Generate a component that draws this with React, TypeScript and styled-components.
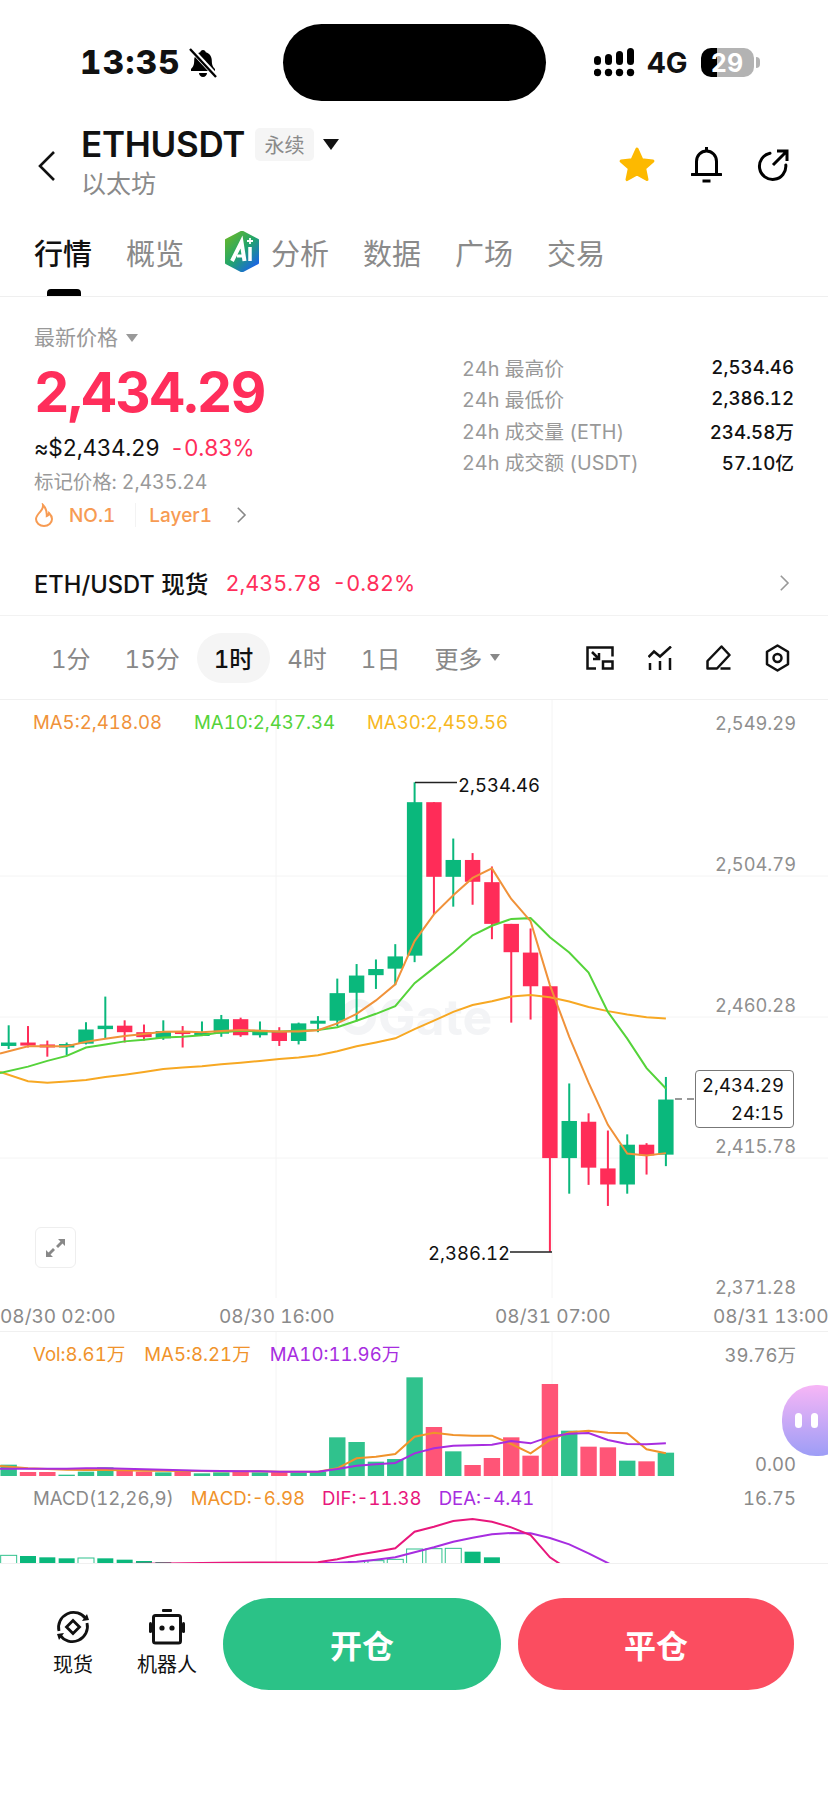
import React from 'react';
import styled, { createGlobalStyle } from 'styled-components';

const FONT = `Inter, 'Noto Sans CJK SC', sans-serif`;

const GlobalStyle = createGlobalStyle`
  html, body {
    margin: 0;
    padding: 0;
    background: #fff;
  }
  body {
    font-family: ${FONT};
    font-variant-numeric: tabular-nums;
    color: #111;
  }
  * {
    box-sizing: border-box;
  }
`;

const Page = styled.div`
  width: 828px;
  height: 1796px;
  overflow: hidden;
  background: #fff;
`;

/* status bar */
const StatusBar = styled.div`
  display: flex;
  height: 101px;
  padding-top: 24px;
`;

const StatusLeft = styled.div`
  width: 283px;
  height: 77px;
  padding-left: 80px;
  display: flex;
  align-items: center;
  gap: 7px;
`;

const Clock = styled.span`
  font-size: 33px;
  font-weight: 800;
  line-height: 1;
  letter-spacing: 1.4px;
`;

const Island = styled.div`
  width: 263px;
  height: 77px;
  border-radius: 39px;
  background: #000;
`;

const StatusRight = styled.div`
  flex: 1;
  height: 77px;
  padding-left: 48px;
  display: flex;
  align-items: center;
`;

const NetLabel = styled.span`
  margin-left: 12px;
  font-size: 29px;
  font-weight: 700;
  line-height: 1;
`;

const Battery = styled.div`
  position: relative;
  margin-left: 13px;
  width: 53px;
  height: 29px;
  border-radius: 10px;
  background: linear-gradient(90deg, #000 0 30%, #b3b3b3 30% 100%);
  display: flex;
  align-items: center;
  justify-content: center;
  color: #fff;
  font-size: 25px;
  font-weight: 700;

  &::after {
    content: '';
    position: absolute;
    right: -6px;
    top: 9px;
    width: 4px;
    height: 11px;
    border-radius: 0 4px 4px 0;
    background: #b3b3b3;
  }
`;

/* header */
const Header = styled.div`
  height: 106px;
  display: flex;
  align-items: flex-start;
  padding: 19px 39px 0 37px;
`;

const BackButton = styled.div`
  width: 44px;
  padding-top: 30px;
  display: flex;
`;

const TitleBlock = styled.div`
  flex: 1;
  display: flex;
  flex-direction: column;
`;

const TitleRow = styled.div`
  display: flex;
  align-items: center;
  height: 48px;
`;

const Symbol = styled.span`
  font-size: 35px;
  font-weight: 600;
  line-height: 48px;
  letter-spacing: -0.3px;
`;

const Badge = styled.span`
  margin-left: 10px;
  width: 59px;
  height: 33px;
  border-radius: 5px;
  background: #f5f5f5;
  color: #8a8a8a;
  font-size: 20px;
  display: flex;
  align-items: center;
  justify-content: center;
`;

const Caret = styled.span<{ $size: number; $color: string }>`
  width: 0;
  height: 0;
  border-left: ${p => p.$size}px solid transparent;
  border-right: ${p => p.$size}px solid transparent;
  border-top: ${p => Math.round(p.$size * 1.35)}px solid ${p => p.$color};
`;

const TitleCaret = styled(Caret)`
  margin-left: 9px;
`;

const Subtitle = styled.span`
  font-size: 25px;
  line-height: 34px;
  margin-top: -1px;
  color: #8a8a8a;
`;

const HeaderIcons = styled.div`
  padding-top: 26px;
  display: flex;
  align-items: center;
  gap: 35px;
`;

/* tabs */
const Tabs = styled.div`
  height: 90px;
  padding-left: 34px;
  display: flex;
  gap: 34px;
  border-bottom: 1px solid #efefef;
`;

const Tab = styled.div<{ $active?: boolean }>`
  position: relative;
  display: flex;
  align-items: center;
  gap: 11px;
  font-size: 29px;
  color: ${p => (p.$active ? '#111' : '#8a8a8a')};
  font-weight: ${p => (p.$active ? 500 : 400)};

  &::after {
    content: '';
    display: ${p => (p.$active ? 'block' : 'none')};
    position: absolute;
    left: 13px;
    bottom: 0;
    width: 34px;
    height: 7px;
    border-radius: 4px 4px 0 0;
    background: #000;
  }
`;

const AiTab = styled(Tab)`
  margin-left: 6px;
`;

/* price summary */
const Summary = styled.div`
  display: flex;
  justify-content: space-between;
  padding: 0 34px 0 34px;
`;

const SummaryLeft = styled.div`
  padding: 26px 0 22px;
`;

const PriceLabel = styled.div`
  display: flex;
  align-items: center;
  gap: 8px;
  font-size: 21px;
  line-height: 30px;
  color: #999;
`;

const BigPrice = styled.div`
  margin-top: 9px;
  font-size: 55px;
  font-weight: 700;
  line-height: 60px;
  letter-spacing: -1.5px;
  color: #ff2e5b;
`;

const FiatRow = styled.div`
  margin-top: 11px;
  display: flex;
  gap: 10px;
  font-size: 22.5px;
  line-height: 30px;
  letter-spacing: -0.3px;
`;

const Change = styled.span`
  color: #ff2e5b;
`;

const MarkPrice = styled.div`
  margin-top: 5px;
  font-size: 19.5px;
  line-height: 28px;
  letter-spacing: -0.1px;
  color: #999;
`;

const TagRow = styled.div`
  margin-top: 6px;
  height: 26px;
  display: flex;
  align-items: center;
  font-size: 19px;
  font-weight: 500;
  color: #f79b53;
`;

const TagLabel = styled.span`
  margin-left: 15px;
`;

const TagSep = styled.span`
  width: 1px;
  height: 24px;
  margin: 0 13px 0 20px;
  background: #f3f3f3;
`;

const TagArrow = styled.span`
  margin-left: 24px;
  display: flex;
`;

const StatsTable = styled.div`
  width: 332px;
  padding-top: 55px;
  display: grid;
  grid-auto-rows: 31.3px;
`;

const StatRow = styled.div`
  display: flex;
  align-items: center;
  justify-content: space-between;
  font-size: 19.8px;
`;

const StatName = styled.span`
  color: #999;
`;

const StatValue = styled.span`
  font-size: 18.7px;
  font-weight: 500;
  color: #111;
`;

/* spot link row */
const SpotRow = styled.div`
  height: 66px;
  padding: 0 38px 0 34px;
  display: flex;
  align-items: center;
  gap: 17px;
  font-size: 21.6px;
  border-bottom: 1px solid #f2f2f2;
`;

const SpotName = styled.span`
  font-size: 23.7px;
  font-weight: 500;
`;

const SpotQuote = styled.span`
  display: flex;
  gap: 11px;
  flex: 1;
  color: #ff2e5b;
`;

/* interval toolbar */
const Toolbar = styled.div`
  height: 83px;
  padding: 0 38px 0 34px;
  display: flex;
  align-items: center;
  justify-content: space-between;
`;

const Intervals = styled.div`
  display: flex;
  align-items: center;
`;

const Interval = styled.div<{ $active?: boolean }>`
  height: 50px;
  padding: 0 17px;
  display: flex;
  align-items: center;
  gap: 8px;
  border-radius: 25px;
  font-size: 24px;
  color: ${p => (p.$active ? '#111' : '#888')};
  font-weight: ${p => (p.$active ? 500 : 400)};
  background: ${p => (p.$active ? '#f5f5f5' : 'transparent')};
`;

const ToolIcons = styled.div`
  display: flex;
  align-items: center;
  gap: 34px;
`;

/* chart panels */
const ChartPanel = styled.div`
  position: relative;
  height: 599px;
  border-top: 1px solid #f0f0f0;
`;

const PanelSvg = styled.svg`
  display: block;
`;

const Legend = styled.div<{ $gap: number }>`
  position: absolute;
  left: 33px;
  top: 12px;
  display: flex;
  gap: ${p => p.$gap}px;
  font-size: 18.6px;
  line-height: 20px;
`;

const LegendItem = styled.span<{ $color: string }>`
  color: ${p => p.$color};
`;

const PriceAxis = styled.div`
  position: absolute;
  right: 32px;
  top: 13px;
  display: grid;
  grid-auto-rows: 141px;
  justify-items: end;
  font-size: 18.3px;
  line-height: 20px;
  color: #8f8f8f;
`;

const ExtremeMark = styled.span<{ $left: number; $top: number }>`
  position: absolute;
  left: ${p => p.$left}px;
  top: ${p => p.$top}px;
  font-size: 18.5px;
  line-height: 22px;
  color: #111;
`;

const LastPriceTag = styled.div`
  position: absolute;
  left: 695px;
  top: 370px;
  width: 99px;
  height: 58px;
  padding-right: 9px;
  border: 1px solid #777;
  border-radius: 4px;
  background: #fff;
  display: flex;
  flex-direction: column;
  justify-content: center;
  align-items: flex-end;
  font-size: 18.5px;
  line-height: 28px;
  color: #111;
`;

const ExpandButton = styled.div`
  position: absolute;
  left: 35px;
  top: 527px;
  width: 41px;
  height: 41px;
  border: 1px solid #eee;
  border-radius: 6px;
  display: flex;
  align-items: center;
  justify-content: center;
`;

const TimeAxis = styled.div`
  height: 34px;
  padding-top: 3px;
  display: grid;
  grid-template-columns: 219px 276px 218px 1fr;
  align-items: center;
  font-size: 19px;
  white-space: nowrap;
  color: #8a8a8a;
  border-bottom: 1px solid #f0f0f0;
`;

const SubPanel = styled.div<{ $height: number }>`
  position: relative;
  height: ${p => p.$height}px;
  overflow: hidden;
`;

const AxisLabel = styled.span<{ $top: number }>`
  position: absolute;
  right: 32px;
  top: ${p => p.$top}px;
  font-size: 18.5px;
  line-height: 20px;
  color: #8a8a8a;
`;

const Assistant = styled.div`
  position: absolute;
  right: -24px;
  top: 53px;
  width: 70px;
  height: 71px;
  border-radius: 34px;
  background: linear-gradient(180deg, #f7b6f6 0%, #9d9df6 100%);
  display: flex;
  align-items: center;
  justify-content: flex-start;
  gap: 9px;
  padding-left: 13px;
`;

const AssistantEye = styled.span`
  width: 7px;
  height: 15px;
  border-radius: 4px;
  background: #fff;
`;

/* bottom action bar */
const ActionBar = styled.div`
  display: flex;
  align-items: flex-start;
  padding: 34px 34px 0 36px;
  border-top: 1px solid #f0f0f0;
`;

const Shortcuts = styled.div`
  display: flex;
  gap: 20px;
  margin-right: 19px;
  padding-top: 11px;
`;

const Shortcut = styled.div`
  width: 74px;
  display: flex;
  flex-direction: column;
  align-items: center;
  gap: 6px;
  font-size: 20px;
  line-height: 28px;
  white-space: nowrap;
`;

const TradeButton = styled.div<{ $color: string; $width: number }>`
  width: ${p => p.$width}px;
  height: 92px;
  border-radius: 46px;
  background: ${p => p.$color};
  display: flex;
  align-items: center;
  justify-content: center;
  color: #fff;
  font-size: 32px;
  font-weight: 700;
`;

const CloseButton = styled(TradeButton)`
  margin-left: 17px;
`;

/* chart data, y values are sampled in chart units and scaled below */
const GREEN = '#0ab87c';
const RED = '#ff2c58';
const BAR_GREEN = '#30c28d';
const BAR_RED = '#ff5577';
const GRID = '#f4f4f4';
const UNIT = 2.613;

const cx = (i: number) => 8.67 + 19.33 * i;
const cy = (v: number) => v / UNIT;

// [up, wickTop, wickBottom, bodyTop, bodyBottom]
const CANDLES: [boolean, number, number, number, number][] = [
  [true, 850, 912, 895, 904],
  [false, 852, 908, 895, 903],
  [false, 890, 932, 900, 908],
  [true, 895, 928, 899, 908],
  [true, 842, 900, 861, 898],
  [true, 775, 885, 851, 860],
  [false, 837, 895, 851, 868],
  [false, 848, 890, 868, 881],
  [true, 837, 888, 865, 884],
  [false, 852, 908, 865, 871],
  [true, 840, 878, 870, 877],
  [true, 823, 880, 834, 872],
  [false, 830, 880, 834, 876],
  [true, 840, 882, 862, 876],
  [false, 855, 904, 866, 891],
  [true, 843, 900, 845, 891],
  [true, 826, 868, 838, 844],
  [true, 728, 852, 766, 838],
  [true, 690, 840, 720, 765],
  [true, 678, 755, 703, 719],
  [true, 638, 745, 670, 702],
  [true, 215, 685, 267, 668],
  [false, 267, 560, 267, 462],
  [true, 362, 540, 418, 462],
  [false, 400, 535, 418, 475],
  [false, 435, 625, 476, 585],
  [false, 585, 843, 585, 659],
  [false, 597, 835, 660, 748],
  [false, 748, 1442, 748, 1197],
  [true, 1002, 1290, 1100, 1197],
  [false, 1080, 1267, 1102, 1222],
  [false, 1125, 1322, 1224, 1266],
  [true, 1135, 1290, 1162, 1266],
  [false, 1158, 1240, 1162, 1190],
  [true, 985, 1218, 1044, 1188],
];

// first value sits at x = 0, the rest on candles 1, 2, 3...
const MA5 = [924, 905, 905, 905, 893, 885, 878, 873, 867, 866, 868, 865, 862, 864, 866, 866, 863, 845, 820, 785, 743, 630, 560, 510, 465, 440, 520, 578, 745, 880, 1000, 1110, 1185, 1190, 1184];
const MA10 = [975, 958, 943, 930, 908, 900, 892, 888, 882, 880, 876, 868, 864, 866, 866, 864, 862, 855, 838, 820, 800, 740, 700, 660, 615, 590, 572, 570, 620, 660, 712, 815, 885, 962, 1015];
const MA30 = [972, 996, 1000, 997, 993, 985, 979, 972, 964, 960, 957, 952, 948, 943, 938, 934, 928, 918, 905, 895, 884, 860, 838, 815, 797, 787, 775, 771, 777, 788, 802, 813, 822, 829, 832];

const VOL_TOPS = [494, 516, 516, 524, 515, 502, 512, 515, 517, 513, 520, 517, 516, 517, 516, 518, 515, 412, 426, 485, 477, 232, 381, 454, 495, 474, 412, 467, 252, 392, 440, 442, 482, 484, 458];
const VOL_MA5 = [498, 505, 507, 509, 510, 510, 511, 512, 512, 513, 513, 514, 514, 514, 515, 515, 515, 505, 475, 470, 462, 410, 398, 405, 407, 407, 432, 460, 420, 397, 392, 398, 400, 448, 460];
const VOL_MA10 = [506, 506, 506, 506, 505, 505, 506, 508, 509, 511, 512, 513, 514, 514, 515, 515, 515, 507, 497, 493, 489, 460, 445, 437, 436, 434, 423, 430, 410, 401, 399, 420, 432, 433, 430];

const MACD_BARS: [number, number, boolean][] = [
  [0, 766, true], [1, 768, false], [2, 772, false], [3, 775, false], [4, 774, true],
  [5, 775, false], [6, 779, false], [7, 783, false], [8, 786, false],
  [18, 785, true], [19, 782, true], [20, 778, true], [21, 747, true], [22, 746, true], [23, 745, true],
  [24, 755, false], [25, 772, false],
];
const DIF = [[0, 796], [9, 790], [11, 788], [16, 787], [17, 778], [18, 765], [19, 755], [20, 745], [21, 695], [22, 680], [23, 663], [24, 657], [25, 665], [26, 682], [27, 705], [28, 772], [29, 810]];
const DEA = [[0, 800], [12, 795], [16, 790], [17, 788], [18, 785], [19, 779], [20, 772], [21, 757], [22, 742], [23, 725], [24, 713], [25, 703], [26, 699], [27, 700], [28, 714], [29, 733], [30, 760], [31.2, 795]];

const maPoints = (values: number[]) =>
  values.map((v, i) => `${i === 0 ? 0 : cx(i)},${cy(v)}`).join(' ');

const KlineChart = () => (
  <PanelSvg width={828} height={598}>
    {[176, 317, 458].map(y => (
      <line key={y} x1={0} x2={828} y1={y} y2={y} stroke={GRID} />
    ))}
    {[276, 552].map(x => (
      <line key={x} x1={x} x2={x} y1={0} y2={598} stroke={GRID} />
    ))}
    <g fill="#f3f4f6" fontFamily="Inter, sans-serif" fontWeight={700}>
      <circle cx={358} cy={317} r={14} fill="none" stroke="#f3f4f6" strokeWidth={8} />
      <text x={378} y={335} fontSize={50}>Gate</text>
    </g>
    {CANDLES.map(([up, wt, wb, bt, bb], i) => {
      const color = up ? GREEN : RED;
      const x = cx(i);
      return (
        <g key={i} fill={color}>
          <rect x={x - 1} y={cy(wt)} width={2} height={cy(wb - wt)} />
          <rect x={x - 7.7} y={cy(bt)} width={15.4} height={Math.max(cy(bb - bt), 3)} />
        </g>
      );
    })}
    <polyline points={maPoints(MA30)} fill="none" stroke="#f7a823" strokeWidth={2} />
    <polyline points={maPoints(MA10)} fill="none" stroke="#55d33a" strokeWidth={2} />
    <polyline points={maPoints(MA5)} fill="none" stroke="#f0923a" strokeWidth={2} />
    <path d="M415 82.5H457M510 552H552" stroke="#222" strokeWidth={1.5} fill="none" />
    <path d="M675 399H695" stroke="#333" strokeDasharray="7 5" />
  </PanelSvg>
);

const VolumeChart = () => {
  const y = (v: number) => v / 3 - 32;
  return (
    <PanelSvg width={828} height={144}>
      {[276, 552].map(x => (
        <line key={x} x1={x} x2={x} y1={0} y2={144} stroke={GRID} />
      ))}
      {VOL_TOPS.map((top, i) => (
        <rect
          key={i}
          x={cx(i) - 8.2}
          y={y(top)}
          width={16.4}
          height={144 - y(top)}
          fill={CANDLES[i][0] ? BAR_GREEN : BAR_RED}
        />
      ))}
      <polyline points={VOL_MA5.map((v, i) => `${i === 0 ? 0 : cx(i)},${y(v)}`).join(' ')} fill="none" stroke="#f0932b" strokeWidth={2} />
      <polyline points={VOL_MA10.map((v, i) => `${i === 0 ? 0 : cx(i)},${y(v)}`).join(' ')} fill="none" stroke="#a72de0" strokeWidth={2} />
    </PanelSvg>
  );
};

const MacdChart = () => {
  const y = (v: number) => v / 3 - 176;
  const line = (pts: number[][]) => pts.map(([i, v]) => `${cx(i)},${y(v)}`).join(' ');
  return (
    <PanelSvg width={828} height={87}>
      {[276, 552].map(x => (
        <line key={x} x1={x} x2={x} y1={0} y2={87} stroke={GRID} />
      ))}
      {MACD_BARS.map(([i, top, hollow]) => (
        <rect
          key={i}
          x={cx(i) - 8}
          y={y(top)}
          width={16}
          height={60}
          fill={hollow ? '#fff' : GREEN}
          stroke={hollow ? BAR_GREEN : 'none'}
          strokeWidth={1}
        />
      ))}
      <polyline points={line(DEA)} fill="none" stroke="#a72de0" strokeWidth={2} />
      <polyline points={line(DIF)} fill="none" stroke="#e8177c" strokeWidth={2} />
    </PanelSvg>
  );
};

/* icons */
const BellSlash = () => (
  <svg width="30" height="30" viewBox="0 0 30 30">
    <path d="M15 2c1.6 0 2.6 1 2.8 2.3 3.8 1 6 4.3 6 8.2 0 4.6 1.2 6.6 3.2 8.5v2H3v-2c2-1.900 3.200-3.900 3.200-8.500 0-3.900 2.200-7.200 6-8.200C12.400 3 13.400 2 15 2z" fill="#000" />
    <path d="M11 25h8c0 2.200-1.800 4-4 4s-4-1.800-4-4z" fill="#000" />
    <path d="M3 1l25 27" stroke="#fff" strokeWidth={5} />
    <path d="M2 1l26 28" stroke="#000" strokeWidth={2.4} />
  </svg>
);

const SignalDots = () => (
  <svg width="41" height="30" viewBox="0 0 41 30" fill="#000">
    <rect x="0" y="8" width="7" height="9" rx="3.500" />
    <rect x="11" y="6" width="7" height="11" rx="3.500" />
    <rect x="22" y="3" width="7" height="14" rx="3.500" />
    <rect x="33" y="0" width="7" height="17" rx="3.500" />
    <circle cx="3.500" cy="24.500" r="3.700" />
    <circle cx="14.500" cy="24.500" r="3.700" />
    <circle cx="25.500" cy="24.500" r="3.700" />
    <circle cx="36.500" cy="24.500" r="3.700" />
  </svg>
);

const BackIcon = () => (
  <svg width="20" height="32" viewBox="0 0 20 32" fill="none" stroke="#111" strokeWidth={2.600}>
    <path d="M17 2L3 16l14 14" />
  </svg>
);

const StarIcon = () => (
  <svg width="38" height="37" viewBox="0 0 36 35">
    <path
      d="M18 3l4.500 10 10.500 1.200-7.800 7 2.200 10.500L18 26.400 8.600 31.700l2.200-10.500-7.800-7L13.500 13z"
      fill="#fdb900"
      stroke="#fdb900"
      strokeWidth={3}
      strokeLinejoin="round"
    />
  </svg>
);

const BellIcon = () => (
  <svg width="31" height="37" viewBox="0 0 31 37" fill="none" stroke="#000" strokeWidth={3}>
    <path d="M15.500 1v4" />
    <path d="M5.500 28V15.500C5.500 9.500 10 5 15.500 5s10 4.500 10 10.500V28" />
    <path d="M1 28.500h29" strokeLinecap="round" />
    <path d="M11.500 35h8" />
  </svg>
);

const ShareIcon = () => (
  <svg width="32" height="32" viewBox="0 0 32 32" fill="none" stroke="#000" strokeWidth={3}>
    <path d="M13 4.300A13.200 13.200 0 1 0 28.800 16" strokeLinecap="round" />
    <path d="M16 16L29 3M20 2h10v10" />
  </svg>
);

const AiBadge = () => (
  <svg width="36" height="41" viewBox="0 0 36 41">
    <defs>
      <linearGradient id="aiFill" x1="0.100" y1="0.100" x2="0.800" y2="0.950">
        <stop offset="0" stopColor="#5fb532" />
        <stop offset="0.500" stopColor="#22a56b" />
        <stop offset="1" stopColor="#1a66e0" />
      </linearGradient>
    </defs>
    <path d="M18 0.500L34 9v23L18 40.500 2 32V9z" fill="url(#aiFill)" stroke="url(#aiFill)" strokeWidth={2} strokeLinejoin="round" />
    <path d="M8 30L17.500 11l3 19" fill="none" stroke="#fff" strokeWidth={4} />
    <path d="M13 25h7" stroke="#fff" strokeWidth={3} />
    <path d="M26 16v14" stroke="#fff" strokeWidth={3.500} />
    <path d="M26 7v6M23 10h6" stroke="#fff" strokeWidth={1.800} />
  </svg>
);

const FlameIcon = () => (
  <svg width="20" height="24" viewBox="0 0 20 24" fill="none" stroke="#f79b53" strokeWidth={2}>
    <path d="M9 2c.5 3.500-1.500 5-3.500 7.500C3 12.500 2 14 2 16a8 7 0 0 0 16 0c0-2.500-1.500-4.500-3-6-.3 1.500-1 2.500-2.200 3C13 9 12 5 9 2z" />
  </svg>
);

const Chevron = ({ color, size }: { color: string; size: number }) => (
  <svg width={size * 0.6} height={size} viewBox="0 0 12 20" fill="none" stroke={color} strokeWidth={1.800}>
    <path d="M2 2l8 8-8 8" />
  </svg>
);

const FitIcon = () => (
  <svg width="28" height="24" viewBox="0 0 28 24" fill="none" stroke="#111" strokeWidth={2.500}>
    <path d="M10 22.500H1.500V1.500h25v9" />
    <rect x="17" y="15.500" width="9.500" height="7" />
    <path d="M6 6l7 7M13 7v6H7" />
  </svg>
);

const IndicatorIcon = () => (
  <svg width="24" height="24" viewBox="0 0 24 24" fill="none" stroke="#111" strokeWidth={2.500}>
    <path d="M0.500 11l5.500-5.500 6 5L23 0.500" />
    <path d="M2 17v7M12 15v9M22 12v12" />
  </svg>
);

const PenIcon = () => (
  <svg width="25" height="25" viewBox="0 0 25 25" fill="none" stroke="#111" strokeWidth={2.500}>
    <path d="M1.500 23.500V16L15.500 1.500l8 8.500L11 23.500z" strokeLinejoin="round" />
    <path d="M14.500 23.500h10" />
  </svg>
);

const SettingIcon = () => (
  <svg width="25" height="28" viewBox="0 0 25 28" fill="none" stroke="#111" strokeWidth={2.500}>
    <path d="M12.500 1.500l10.500 6.300v12.400l-10.500 6.300L2 20.200V7.800z" strokeLinejoin="round" />
    <circle cx="12.500" cy="14" r="4" />
  </svg>
);

const ExpandIcon = () => (
  <svg width="21" height="20" viewBox="0 0 21 20" fill="#888">
    <path d="M20 1v7l-2.500-2.500-4.500 4.500-2-2 4.500-4.500L13 1zM1 19v-7l2.500 2.500 4.500-4.500 2 2-4.500 4.500L8 19z" />
  </svg>
);

const SpotIcon = () => (
  <svg width="36" height="36" viewBox="0 0 36 36" fill="none" stroke="#111" strokeWidth={2.800}>
    <path d="M4 22A15 15 0 0 1 31 10" />
    <path d="M32 14A15 15 0 0 1 5 26" />
    <path d="M34 11l-7 1 5-7z" fill="#111" stroke="none" />
    <path d="M2 25l7-1-5 7z" fill="#111" stroke="none" />
    <path d="M18 11.500L24.500 18 18 24.500 11.500 18z" />
  </svg>
);

const RobotIcon = () => (
  <svg width="36" height="36" viewBox="0 0 36 36" fill="#111">
    <rect x="13" y="0" width="10" height="3" rx="1" />
    <rect x="4.500" y="6.500" width="27" height="27.500" rx="2" fill="none" stroke="#111" strokeWidth={3} />
    <rect x="0" y="13" width="3" height="11" rx="1.500" />
    <rect x="33" y="13" width="3" height="11" rx="1.500" />
    <circle cx="13" cy="19" r="2.600" />
    <circle cx="23" cy="19" r="2.600" />
  </svg>
);

const STATS = [
  ['24h 最高价', '2,534.46'],
  ['24h 最低价', '2,386.12'],
  ['24h 成交量 (ETH)', '234.58万'],
  ['24h 成交额 (USDT)', '57.10亿'],
];

const INTERVALS = ['1分', '15分', '1时', '4时', '1日'];
const AXIS_PRICES = ['2,549.29', '2,504.79', '2,460.28', '2,415.78', '2,371.28'];

const App: React.FC = () => {
  return (
    <Page>
      <GlobalStyle />
      <StatusBar>
        <StatusLeft>
          <Clock>13:35</Clock>
          <BellSlash />
        </StatusLeft>
        <Island />
        <StatusRight>
          <SignalDots />
          <NetLabel>4G</NetLabel>
          <Battery>29</Battery>
        </StatusRight>
      </StatusBar>

      <Header>
        <BackButton>
          <BackIcon />
        </BackButton>
        <TitleBlock>
          <TitleRow>
            <Symbol>ETHUSDT</Symbol>
            <Badge>永续</Badge>
            <TitleCaret $size={8} $color="#111" />
          </TitleRow>
          <Subtitle>以太坊</Subtitle>
        </TitleBlock>
        <HeaderIcons>
          <StarIcon />
          <BellIcon />
          <ShareIcon />
        </HeaderIcons>
      </Header>

      <Tabs>
        <Tab $active>行情</Tab>
        <Tab>概览</Tab>
        <AiTab>
          <AiBadge />
          分析
        </AiTab>
        <Tab>数据</Tab>
        <Tab>广场</Tab>
        <Tab>交易</Tab>
      </Tabs>

      <Summary>
        <SummaryLeft>
          <PriceLabel>
            最新价格
            <Caret $size={6} $color="#999" />
          </PriceLabel>
          <BigPrice>2,434.29</BigPrice>
          <FiatRow>
            ≈$2,434.29
            <Change>-0.83%</Change>
          </FiatRow>
          <MarkPrice>标记价格: 2,435.24</MarkPrice>
          <TagRow>
            <FlameIcon />
            <TagLabel>NO.1</TagLabel>
            <TagSep />
            Layer1
            <TagArrow>
              <Chevron color="#888" size={18} />
            </TagArrow>
          </TagRow>
        </SummaryLeft>
        <StatsTable>
          {STATS.map(([name, value]) => (
            <StatRow key={name}>
              <StatName>{name}</StatName>
              <StatValue>{value}</StatValue>
            </StatRow>
          ))}
        </StatsTable>
      </Summary>

      <SpotRow>
        <SpotName>ETH/USDT 现货</SpotName>
        <SpotQuote>
          <span>2,435.78</span>
          <span>-0.82%</span>
        </SpotQuote>
        <Chevron color="#999" size={18} />
      </SpotRow>

      <Toolbar>
        <Intervals>
          {INTERVALS.map(item => (
            <Interval key={item} $active={item === '1时'}>
              {item}
            </Interval>
          ))}
          <Interval>
            更多
            <Caret $size={5} $color="#888" />
          </Interval>
        </Intervals>
        <ToolIcons>
          <FitIcon />
          <IndicatorIcon />
          <PenIcon />
          <SettingIcon />
        </ToolIcons>
      </Toolbar>

      <ChartPanel>
        <KlineChart />
        <Legend $gap={32}>
          <LegendItem $color="#f0923a">MA5:2,418.08</LegendItem>
          <LegendItem $color="#55d33a">MA10:2,437.34</LegendItem>
          <LegendItem $color="#f7b81f">MA30:2,459.56</LegendItem>
        </Legend>
        <PriceAxis>
          {AXIS_PRICES.map(price => (
            <span key={price}>{price}</span>
          ))}
        </PriceAxis>
        <ExtremeMark $left={458} $top={74}>2,534.46</ExtremeMark>
        <ExtremeMark $left={428} $top={542}>2,386.12</ExtremeMark>
        <LastPriceTag>
          <span>2,434.29</span>
          <span>24:15</span>
        </LastPriceTag>
        <ExpandButton>
          <ExpandIcon />
        </ExpandButton>
      </ChartPanel>

      <TimeAxis>
        <span>08/30 02:00</span>
        <span>08/30 16:00</span>
        <span>08/31 07:00</span>
        <span>08/31 13:00</span>
      </TimeAxis>

      <SubPanel $height={144}>
        <VolumeChart />
        <Legend $gap={19}>
          <LegendItem $color="#f0932b">Vol:8.61万</LegendItem>
          <LegendItem $color="#f0932b">MA5:8.21万</LegendItem>
          <LegendItem $color="#a72de0">MA10:11.96万</LegendItem>
        </Legend>
        <AxisLabel $top={13}>39.76万</AxisLabel>
        <AxisLabel $top={122}>0.00</AxisLabel>
        <Assistant>
          <AssistantEye />
          <AssistantEye />
        </Assistant>
      </SubPanel>

      <SubPanel $height={87}>
        <MacdChart />
        <Legend $gap={17}>
          <LegendItem $color="#8a8a8a">MACD(12,26,9)</LegendItem>
          <LegendItem $color="#f0932b">MACD:-6.98</LegendItem>
          <LegendItem $color="#e8177c">DIF:-11.38</LegendItem>
          <LegendItem $color="#a72de0">DEA:-4.41</LegendItem>
        </Legend>
        <AxisLabel $top={12}>16.75</AxisLabel>
      </SubPanel>

      <ActionBar>
        <Shortcuts>
          <Shortcut>
            <SpotIcon />
            现货
          </Shortcut>
          <Shortcut>
            <RobotIcon />
            机器人
          </Shortcut>
        </Shortcuts>
        <TradeButton $color="#2bc287" $width={278}>开仓</TradeButton>
        <CloseButton $color="#fb4d60" $width={276}>平仓</CloseButton>
      </ActionBar>
    </Page>
  );
};

export default App;
